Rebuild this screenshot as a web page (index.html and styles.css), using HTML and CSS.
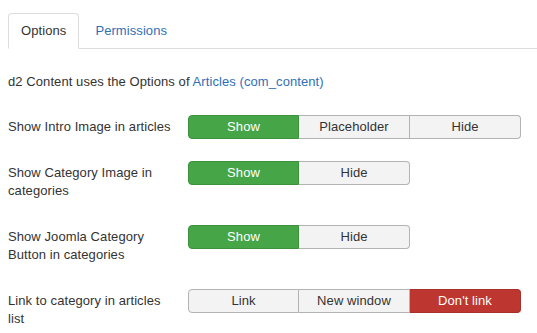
FILE: index.html
```html
<!doctype html>
<html lang="en">
    <head>
        <meta charset="UTF-8" />
        <title>d2 Content Options</title>
        <link rel="stylesheet" href="styles.css">
    </head>
    <body>
        <div class="container">
            <ul class="tabs">
                <li class="tab active">Options</li>
                <li class="tab"><a href="#">Permissions</a></li>
            </ul>

            <p class="intro">d2 Content uses the Options of <a href="#">Articles (com_content)</a></p>

            <div class="control-group">
                <div class="control-label">Show Intro Image in articles</div>
                <div class="btn-group">
                    <span class="btn success">Show</span>
                    <span class="btn">Placeholder</span>
                    <span class="btn">Hide</span>
                </div>
            </div>

            <div class="control-group">
                <div class="control-label">Show Category Image in categories</div>
                <div class="btn-group">
                    <span class="btn success">Show</span>
                    <span class="btn">Hide</span>
                </div>
            </div>

            <div class="control-group">
                <div class="control-label">Show Joomla Category Button in categories</div>
                <div class="btn-group">
                    <span class="btn success">Show</span>
                    <span class="btn">Hide</span>
                </div>
            </div>

            <div class="control-group">
                <div class="control-label">Link to category in articles list</div>
                <div class="btn-group">
                    <span class="btn">Link</span>
                    <span class="btn">New window</span>
                    <span class="btn danger">Don't link</span>
                </div>
            </div>
        </div>
    </body>
</html>
```

FILE: styles.css
```css
* {
    margin: 0;
    padding: 0;
    box-sizing: border-box;
}

body {
    font-family: "Liberation Sans", Arial, sans-serif;
    font-size: 13px;
    line-height: 18px;
    letter-spacing: 0.08px;
    color: #333;
    background: #fff;
}

a {
    color: #2f6fb7;
    text-decoration: none;
}

.container {
    padding: 13px 0 0 8px;
}

.tabs {
    display: flex;
    list-style: none;
    border-bottom: 1px solid #ddd;
}

.tab {
    padding: 8px 12px;
    margin-right: 2px;
    margin-bottom: -1px;
    border: 1px solid transparent;
    border-radius: 4px 4px 0 0;
}

.tab.active {
    border-color: #ddd;
    border-bottom-color: #fff;
    background: #fff;
}

.tab a {
    padding: 0 1px;
}

.intro {
    margin: 24px 0 24px;
}

.control-group {
    display: flex;
    align-items: flex-start;
    margin-bottom: 22px;
}

.control-label {
    width: 170px;
    margin-right: 10px;
    padding: 3px 0;
}

.btn-group {
    display: flex;
}

.btn {
    width: 111px;
    height: 24px;
    line-height: 22px;
    text-align: center;
    background: #f3f3f3;
    border: 1px solid #b3b3b3;
    border-left-width: 0;
    color: #333;
}

.btn:first-child {
    border-left-width: 1px;
    border-radius: 4px 0 0 4px;
}

.btn:last-child {
    border-radius: 0 4px 4px 0;
}

.btn.success {
    background: #46a546;
    border-color: #3c913c;
    color: #fff;
}

.btn.danger {
    background: #bd362f;
    border-color: #a8302a;
    color: #fff;
}
```
